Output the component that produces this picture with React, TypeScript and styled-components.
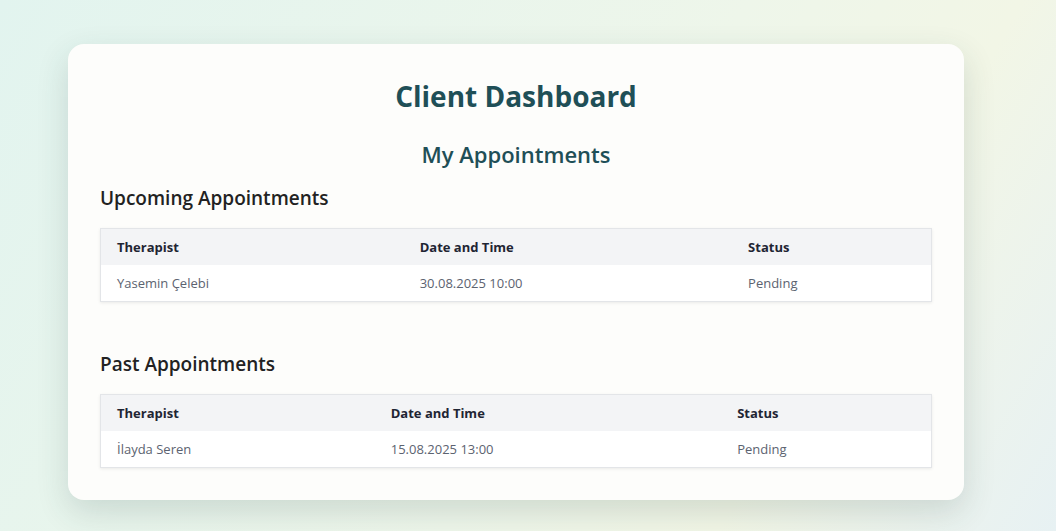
import * as React from 'react';
import styled, { createGlobalStyle } from 'styled-components';

const GlobalStyle = createGlobalStyle`
    html, body {
        margin: 0;
        padding: 0;
    }
    body {
        font-family: "Open Sans", "Noto Sans", sans-serif;
        background: linear-gradient(120deg, #e2f4ef 0%, #eef6ea 55%, #f2f6e6 75%, #e7f1f3 100%);
        min-height: 100vh;
    }
`;

const Page = styled.div`
    min-height: 531px;
    box-sizing: border-box;
    padding: 44px 92px 32px 68px;
`;

const Card = styled.div`
    width: 896px;
    box-sizing: border-box;
    background: #fdfdfb;
    border-radius: 16px;
    padding: 32px 32px 32px;
    box-shadow: 0 12px 32px rgba(40, 70, 70, 0.16);
`;

const Title = styled.h1`
    margin: 0;
    text-align: center;
    font-size: 28px;
    font-weight: 700;
    color: #1f4f57;
    line-height: 40px;
`;

const Subtitle = styled.h2`
    margin: 21px 0 0;
    text-align: center;
    font-size: 22px;
    font-weight: 600;
    color: #1f4f57;
    line-height: 34px;
`;

const Section = styled.section<{ $spacing: number }>`
    margin-top: ${p => p.$spacing}px;
`;

const SectionTitle = styled.h3`
    margin: 0 0 16px;
    font-size: 19px;
    font-weight: 600;
    color: #222;
    line-height: 28px;
`;

const Table = styled.table`
    width: 100%;
    border-collapse: collapse;
    border: 1px solid #e3e5e8;
    box-shadow: 0 1px 3px rgba(0, 0, 0, 0.08);
    font-size: 13px;
`;

const HeadCell = styled.th`
    text-align: left;
    background: #f3f4f6;
    color: #1f2533;
    font-weight: 700;
    padding: 0 16px;
    height: 36px;
`;

const Cell = styled.td`
    background: #fff;
    color: #5c6370;
    padding: 0 16px;
    height: 36px;
`;

interface Appointment {
    therapist: string;
    date: string;
    status: string;
}

const upcoming: Appointment[] = [
    { therapist: 'Yasemin Çelebi', date: '30.08.2025 10:00', status: 'Pending' },
];

const past: Appointment[] = [
    { therapist: 'İlayda Seren', date: '15.08.2025 13:00', status: 'Pending' },
];

const AppointmentTable = ({ rows }: { rows: Appointment[] }) => (
    <Table>
        <thead>
            <tr>
                <HeadCell>Therapist</HeadCell>
                <HeadCell>Date and Time</HeadCell>
                <HeadCell>Status</HeadCell>
            </tr>
        </thead>
        <tbody>
            {rows.map((r, i) => (
                <tr key={i}>
                    <Cell>{r.therapist}</Cell>
                    <Cell>{r.date}</Cell>
                    <Cell>{r.status}</Cell>
                </tr>
            ))}
        </tbody>
    </Table>
);

export default function App() {
    return (
        <Page>
            <GlobalStyle />
            <Card>
                <Title>Client Dashboard</Title>
                <Subtitle>My Appointments</Subtitle>
                <Section $spacing={13}>
                    <SectionTitle>Upcoming Appointments</SectionTitle>
                    <AppointmentTable rows={upcoming} />
                </Section>
                <Section $spacing={48}>
                    <SectionTitle>Past Appointments</SectionTitle>
                    <AppointmentTable rows={past} />
                </Section>
            </Card>
        </Page>
    );
}
